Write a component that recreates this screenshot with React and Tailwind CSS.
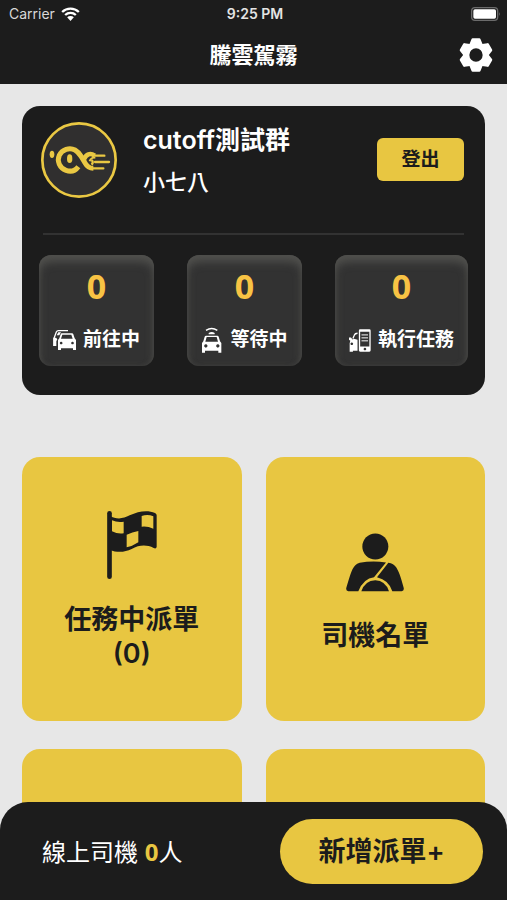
const stats = [
  { id: "heading", label: "前往中", count: 0, Icon: CarsIcon },
  { id: "waiting", label: "等待中", count: 0, Icon: SignalCarIcon },
  { id: "running", label: "執行任務", count: 0, Icon: PhoneCarIcon },
];

const menu = [
  { id: "tasks", label: "任務中派單", count: 0, Icon: FlagIcon },
  { id: "drivers", label: "司機名單", Icon: DriverIcon },
  { id: "history" },
  { id: "account" },
];

function WifiIcon() {
  return (
    <svg className="h-[14px] w-[19px]" viewBox="0 0 56 42" fill="none">
      <path d="M3 15a36 36 0 0 1 50 0" stroke="#fff" strokeWidth="7" />
      <path d="M12 24a23 23 0 0 1 32 0" stroke="#fff" strokeWidth="7" />
      <path d="M28 42 18 31a14 14 0 0 1 20 0z" fill="#fff" />
    </svg>
  );
}

function BatteryIcon() {
  return (
    <svg className="h-[14px] w-[30px]" viewBox="0 0 90 42" fill="none">
      <rect x="2" y="2" width="78" height="38" rx="10" stroke="#6b6b6b" strokeWidth="4" />
      <rect x="7" y="7" width="68" height="28" rx="5" fill="#fff" />
      <path d="M84 15q5 6 0 12z" fill="#6b6b6b" />
    </svg>
  );
}

function GearIcon() {
  return (
    <svg className="size-[34px]" viewBox="-51 -51 102 102" fill="#fff">
      <circle r="29" fill="none" stroke="#fff" strokeWidth="18" />
      <g stroke="#fff" strokeWidth="8" strokeLinejoin="round">
        {[0, 60, 120, 180, 240, 300].map((angle) => (
          <path key={angle} d="M-16 -31 -10 -46H10L16 -31z" transform={`rotate(${angle})`} />
        ))}
      </g>
    </svg>
  );
}

function Logo() {
  return (
    <svg className="size-[76px] shrink-0" viewBox="9 8 228 228" fill="none">
      <circle cx="123" cy="122" r="110" fill="#302f2f" stroke="#eac843" strokeWidth="8" />
      <g stroke="#eac843">
        <path
          d="M121 142C112 154 98 158 84 153C65 146 56 126 64 108C72 90 95 83 111 92C120 97 125 104 130 112L140 129C147 142 153 147 166 147"
          strokeWidth="15"
        />
        <path d="M138 119C145 105 156 99 170 109" strokeWidth="14" />
        <path d="M155 126C157 118 165 114 172 115" strokeWidth="6" />
        <path d="M166 109H199M171 128H213M164 147H196" strokeWidth="7" strokeLinecap="round" />
        <path d="M160 122q8 5 1 14" strokeWidth="7" />
      </g>
      <ellipse cx="95" cy="118" rx="8" ry="13" fill="#eac843" />
      <ellipse cx="42" cy="105" rx="7" ry="11" fill="#eac843" />
    </svg>
  );
}

function CarsIcon() {
  return (
    <svg className="h-[22px] w-[23px]" viewBox="100 309 69 66">
      <path d="M103 360V337L110 318Q112 314 116 314H145" fill="none" stroke="#fff" strokeWidth="4" />
      <path d="M101 335h8l4 5-3 6v14h-9z" fill="#fff" />
      <path d="M111 328l5-9h8l-5 9z" fill="#fff" />
      <path
        fillRule="evenodd"
        fill="#fff"
        d="M126 322h31q3 0 4 3l4 12 4 5v30h-9v-5h-36v5h-9v-30l4-5 4-12q1-3 3-3zM128 326l-4 12h35l-4-12zM124 347a4 4 0 1 0 1 0zM158 347a4 4 0 1 0 1 0z"
      />
    </svg>
  );
}

function SignalCarIcon() {
  return (
    <svg className="h-[26px] w-[22px]" viewBox="546 303 66 78">
      <path d="M561 313Q578 302 595 313" fill="none" stroke="#fff" strokeWidth="4" />
      <path d="M569 321Q578 315 587 321V325H569z" fill="#fff" />
      <path
        fillRule="evenodd"
        fill="#fff"
        d="M561 329h34q3 0 4 3l4 14 4 5v29h-9v-6h-40v6h-9v-29l4-5 4-14q1-3 4-3zM563 333l-4 14h38l-4-14zM560 355a5 5 0 1 0 1 0zM596 355a5 5 0 1 0 1 0z"
      />
    </svg>
  );
}

function PhoneCarIcon() {
  return (
    <svg className="h-[23px] w-[22px]" viewBox="302 307 67 70">
      <path
        fillRule="evenodd"
        fill="#fff"
        d="M336 308h28q4 0 4 4v60q0 4-4 4h-28q-4 0-4-4v-60q0-4 4-4zM336 315v45h28v-45zM350 364a4 4 0 1 0 1 0z"
      />
      <path d="M340 325h20M340 334h20M340 343h20" stroke="#fff" strokeWidth="3" />
      <path d="M328 320q-8 0-10 6l-4 10" fill="none" stroke="#fff" strokeWidth="4" />
      <path
        fillRule="evenodd"
        fill="#fff"
        d="M301 333h7l5 6 4-2 11 3v33h-14v3h-10v-26l2-7-5-4zM310 348a4 4 0 1 0 1 0z"
      />
    </svg>
  );
}

function FlagIcon() {
  return (
    <svg className="h-[68px] w-[50px]" viewBox="84 64 150 204">
      <path d="M91.500 71V261" stroke="#1c1c1c" strokeWidth="14" strokeLinecap="round" />
      <path
        fillRule="evenodd"
        fill="#1c1c1c"
        d="M92 78C112 90 132 88 152 77C178 65 205 60 228 70Q233 72 233 77V172Q231 179 224 175C202 164 180 166 158 178C137 188 115 190 92 180zM99 92V125Q116 134 134 131V96Q115 99 99 92zM188 79V111Q206 109 223 117V80Q206 73 188 79zM143 135V173Q160 170 178 158V124Q160 127 143 135z"
      />
    </svg>
  );
}

function DriverIcon() {
  return (
    <svg className="h-[65px] w-[58px]" viewBox="50 39 174 176" fill="#1c1c1c">
      <circle cx="138" cy="79" r="39" />
      <path d="M91 128Q130 120 170 127L134 171Q103 174 87 213H57Q49 212 51 203C59 177 66 146 78 135Q83 130 91 128z" />
      <path d="M177 128Q193 130 201 142C211 158 218 184 223 203Q225 212 217 213H189Q178 179 143 171z" />
      <path d="M96 213Q107 181 138 180Q168 181 179 213z" />
    </svg>
  );
}

const StatCard = ({ label, count, Icon }) => (
  <div className="flex h-[111px] flex-col items-center justify-between rounded-xl bg-[#323232] px-[14px] pt-3 pb-3 shadow-[inset_0_7px_9px_#50504d,inset_0_0_5px_#3e3e3c]">
    <span className="font-['Noto_Sans',sans-serif] text-[34px] leading-[38px] font-bold text-[#f8c344]">
      {count}
    </span>
    <span className="flex h-7 items-center gap-[7px] text-[19px] font-semibold whitespace-nowrap text-white">
      <Icon />
      {label}
    </span>
  </div>
);

const MenuCard = ({ label, count, Icon }) => (
  <button
    type="button"
    className="flex h-[264px] flex-col items-center justify-center rounded-[18px] bg-[#e8c641] pt-1 text-[27px] leading-[34px] font-semibold text-[#1c1c1c]"
  >
    {Icon && <Icon />}
    {label && <span className="mt-6">{label}</span>}
    {count !== undefined && <span>({count})</span>}
  </button>
);

export default function App() {
  return (
    <div className="flex h-screen flex-col bg-[#e7e7e7] font-[Inter,'Noto_Sans_CJK_TC',sans-serif]">
      <header className="h-[84px] shrink-0 bg-[#1c1c1c] text-white">
        <div className="grid h-[27px] grid-cols-3 items-center pr-[6px] pl-[9px] text-sm">
          <span className="flex items-center gap-[6px] text-[#d8d8d8]">
            Carrier <WifiIcon />
          </span>
          <span className="text-center font-semibold text-[#e4e4e4]">9:25 PM</span>
          <span className="flex justify-end">
            <BatteryIcon />
          </span>
        </div>
        <div className="grid h-14 grid-cols-[1fr_auto_1fr] items-center px-[14px]">
          <h1 className="col-start-2 text-[22px] font-bold">騰雲駕霧</h1>
          <button type="button" aria-label="設定" className="justify-self-end">
            <GearIcon />
          </button>
        </div>
      </header>

      <main className="flex-1 overflow-y-auto px-[22px] pt-[22px] pb-28 [scrollbar-width:none]">
        <section className="rounded-[18px] bg-[#1c1c1c] px-[17px] pt-4 pb-[29px] text-white">
          <div className="flex pl-[2px]">
            <Logo />
            <div className="ml-[26px] flex-1">
              <h2 className="text-[25px] leading-9 font-semibold">cutoff測試群</h2>
              <p className="mt-2 text-[22px] leading-8 font-medium">小七八</p>
            </div>
            <button
              type="button"
              className="mt-4 mr-1 h-[43px] w-[87px] rounded-md bg-[#e8c641] pt-[2px] text-[19px] font-semibold text-[#1c1c1c]"
            >
              登出
            </button>
          </div>
          <hr className="mx-1 mt-[35px] mb-5 border-t-2 border-[#323232]" />
          <div className="flex justify-between">
            {stats.map((stat) => (
              <StatCard key={stat.id} {...stat} />
            ))}
          </div>
        </section>

        <section className="mt-[62px] grid grid-cols-2 gap-x-6 gap-y-7">
          {menu.map((item) => (
            <MenuCard key={item.id} {...item} />
          ))}
        </section>
      </main>

      <footer className="fixed inset-x-0 bottom-0 flex h-[98px] items-center justify-between rounded-t-[28px] bg-[#1c1c1c] pr-6 pl-[42px]">
        <p className="pt-[2px] text-2xl text-white">
          線上司機 <span className="font-['Noto_Sans',sans-serif] font-bold text-[#e8c641]">0</span>人
        </p>
        <button
          type="button"
          className="h-[65px] w-[203px] rounded-full bg-[#e8c641] pt-[2px] text-[27px] font-semibold text-[#1c1c1c]"
        >
          新增派單+
        </button>
      </footer>
    </div>
  );
}
